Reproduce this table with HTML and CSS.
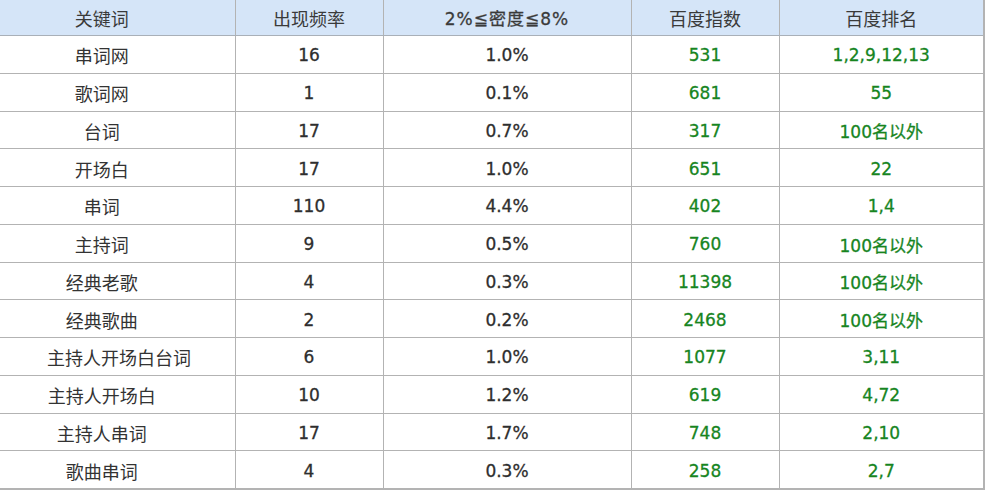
FILE: index.html
```html
<!DOCTYPE html>
<html>
<head>
<meta charset="utf-8">
<link rel="stylesheet" href="styles.css">
</head>
<body>
<table class="kw">
  <colgroup>
    <col class="c1"><col class="c2"><col class="c3"><col class="c4"><col class="c5">
  </colgroup>
  <thead>
    <tr><th class="first">关键词</th><th>出现频率</th><th class="num">2%≦密度≦8%</th><th>百度指数</th><th>百度排名</th></tr>
  </thead>
  <tbody>
    <tr><td class="cn">串词网</td><td class="num">16</td><td class="num">1.0%</td><td class="g">531</td><td class="g">1,2,9,12,13</td></tr>
    <tr><td class="cn">歌词网</td><td class="num">1</td><td class="num">0.1%</td><td class="g">681</td><td class="g">55</td></tr>
    <tr><td class="cn">台词</td><td class="num">17</td><td class="num">0.7%</td><td class="g">317</td><td class="g">100名以外</td></tr>
    <tr><td class="cn">开场白</td><td class="num">17</td><td class="num">1.0%</td><td class="g">651</td><td class="g">22</td></tr>
    <tr><td class="cn">串词</td><td class="num">110</td><td class="num">4.4%</td><td class="g">402</td><td class="g">1,4</td></tr>
    <tr><td class="cn">主持词</td><td class="num">9</td><td class="num">0.5%</td><td class="g">760</td><td class="g">100名以外</td></tr>
    <tr><td class="cn">经典老歌</td><td class="num">4</td><td class="num">0.3%</td><td class="g">11398</td><td class="g">100名以外</td></tr>
    <tr><td class="cn">经典歌曲</td><td class="num">2</td><td class="num">0.2%</td><td class="g">2468</td><td class="g">100名以外</td></tr>
    <tr><td class="cn">主持人开场白台词</td><td class="num">6</td><td class="num">1.0%</td><td class="g">1077</td><td class="g">3,11</td></tr>
    <tr><td class="cn">主持人开场白</td><td class="num">10</td><td class="num">1.2%</td><td class="g">619</td><td class="g">4,72</td></tr>
    <tr><td class="cn">主持人串词</td><td class="num">17</td><td class="num">1.7%</td><td class="g">748</td><td class="g">2,10</td></tr>
    <tr><td class="cn">歌曲串词</td><td class="num">4</td><td class="num">0.3%</td><td class="g">258</td><td class="g">2,7</td></tr>
  </tbody>
</table>
</body>
</html>
```
FILE: styles.css
```css
html, body {
  margin: 0;
  padding: 0;
  background: #ffffff;
}
.kw {
  border-collapse: collapse;
  table-layout: fixed;
  width: 984px;
  font-family: "DejaVu Sans", "Noto Sans CJK SC", sans-serif;
  color: #333333;
}
.c1 { width: 235px; }
.c2 { width: 148px; }
.c3 { width: 248px; }
.c4 { width: 148px; }
.c5 { width: 205px; }
.kw th {
  background: #d5e5f8;
  font-weight: normal;
  font-family: "Noto Sans CJK SC", sans-serif;
  font-size: 18px;
  height: 35px;
  padding: 0;
  text-align: center;
  vertical-align: middle;
  border-right: 1px solid #b3b3b3;
  border-bottom: 1px solid #a9b0b8;
  color: #3a3a3a;
}
.kw th.num {
  font-family: "DejaVu Sans", "Noto Sans CJK SC", sans-serif;
  font-size: 17px;
  letter-spacing: 1px;
  -webkit-text-stroke: 0.3px currentColor;
}
.kw td {
  height: 34.75px;
  padding: 2px 0 0;
  text-align: center;
  vertical-align: middle;
  border-right: 1px solid #b3b3b3;
  border-bottom: 1px solid #b3b3b3;
  font-size: 17px;
  white-space: nowrap;
}
.kw .first,
.kw td.cn {
  padding-left: 47px;
  padding-right: 78px;
  white-space: nowrap;
}
.kw tr > :last-child {
  border-right: 2px solid #b3b3b3;
}
.kw tbody tr:last-child td {
  border-bottom: 2px solid #b3b3b3;
}
.kw td.cn {
  font-family: "Noto Sans CJK SC", sans-serif;
  font-size: 18px;
  color: #333;
}
.kw td.num {
  color: #2e2e2e;
  -webkit-text-stroke: 0.3px currentColor;
}
.kw td.g {
  color: #17851f;
  -webkit-text-stroke: 0.3px currentColor;
}
```
